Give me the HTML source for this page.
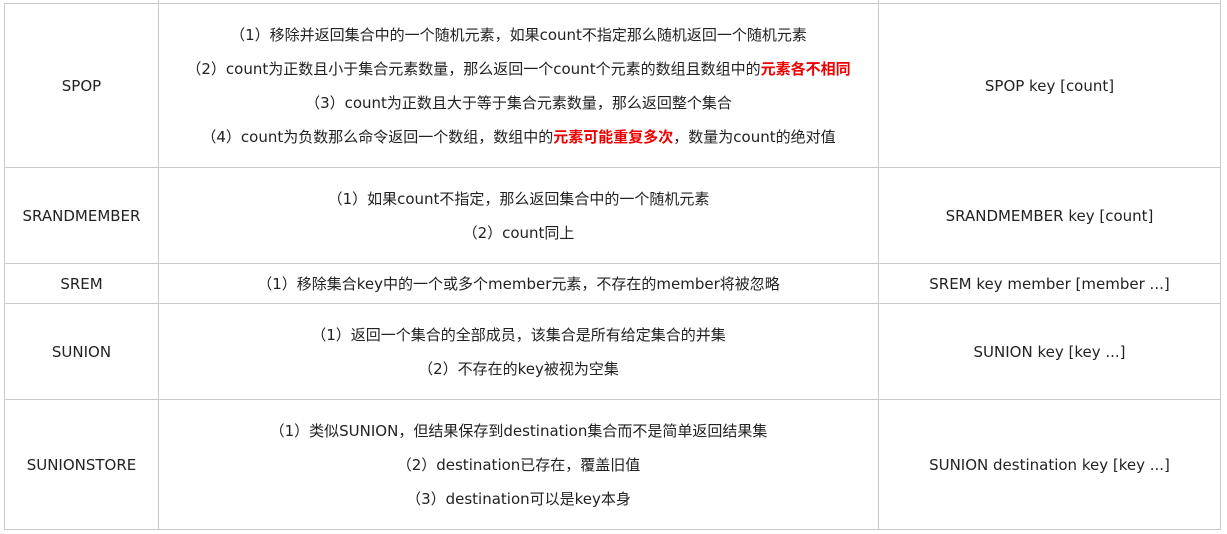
<!DOCTYPE html><html><head><style>
body{margin:0;background:#fff;width:1227px;height:534px;position:relative;overflow:hidden;font-family:"DejaVu Sans","Noto Sans CJK SC",sans-serif;font-size:15px;color:#222}
.c{position:absolute;display:flex;flex-direction:column;justify-content:center;align-items:center;text-align:center;line-height:34px;white-space:nowrap;padding-top:0;box-sizing:border-box}
.h{position:absolute;left:4px;width:1217px;height:1px;background:#c8c8c8}
.v{position:absolute;top:0;height:530px;width:1px;background:#c8c8c8}
b{color:#e00;font-weight:bold}
</style></head><body>
<div class="h" style="top:3px"></div><div class="h" style="top:167px"></div><div class="h" style="top:263px"></div><div class="h" style="top:303px"></div><div class="h" style="top:399px"></div><div class="h" style="top:529px"></div>
<div class="v" style="left:4px;top:3px;height:527px"></div><div class="v" style="left:158px"></div><div class="v" style="left:878px"></div><div class="v" style="left:1220px"></div>

<div class="c" style="left:5px;width:153px;top:4px;height:163px">SPOP</div>
<div class="c" style="left:159px;width:719px;top:4px;height:163px"><div>（1）移除并返回集合中的一个随机元素，如果count不指定那么随机返回一个随机元素</div><div>（2）count为正数且小于集合元素数量，那么返回一个count个元素的数组且数组中的<b>元素各不相同</b></div><div>（3）count为正数且大于等于集合元素数量，那么返回整个集合</div><div>（4）count为负数那么命令返回一个数组，数组中的<b>元素可能重复多次</b>，数量为count的绝对值</div></div>
<div class="c" style="left:879px;width:341px;top:4px;height:163px">SPOP key [count]</div>

<div class="c" style="left:5px;width:153px;top:168px;height:95px">SRANDMEMBER</div>
<div class="c" style="left:159px;width:719px;top:168px;height:95px"><div>（1）如果count不指定，那么返回集合中的一个随机元素</div><div>（2）count同上</div></div>
<div class="c" style="left:879px;width:341px;top:168px;height:95px">SRANDMEMBER key [count]</div>

<div class="c" style="left:5px;width:153px;top:264px;height:39px">SREM</div>
<div class="c" style="left:159px;width:719px;top:264px;height:39px">（1）移除集合key中的一个或多个member元素，不存在的member将被忽略</div>
<div class="c" style="left:879px;width:341px;top:264px;height:39px">SREM key member [member ...]</div>

<div class="c" style="left:5px;width:153px;top:304px;height:95px">SUNION</div>
<div class="c" style="left:159px;width:719px;top:304px;height:95px"><div>（1）返回一个集合的全部成员，该集合是所有给定集合的并集</div><div>（2）不存在的key被视为空集</div></div>
<div class="c" style="left:879px;width:341px;top:304px;height:95px">SUNION key [key ...]</div>

<div class="c" style="left:5px;width:153px;top:400px;height:129px">SUNIONSTORE</div>
<div class="c" style="left:159px;width:719px;top:400px;height:129px"><div>（1）类似SUNION，但结果保存到destination集合而不是简单返回结果集</div><div>（2）destination已存在，覆盖旧值</div><div>（3）destination可以是key本身</div></div>
<div class="c" style="left:879px;width:341px;top:400px;height:129px">SUNION destination key [key ...]</div>
</body></html>
